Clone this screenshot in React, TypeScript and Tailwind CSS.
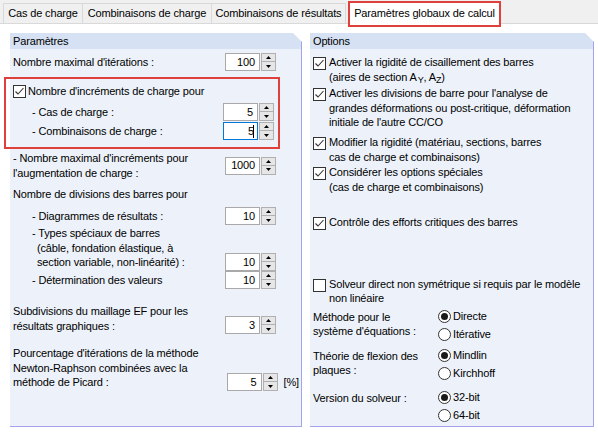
import React from "react";

function Spin({ v, focus }: { v: string; focus?: boolean }) {
  return (
    <div className="flex h-[18px] shrink-0">
      <div
        className={
          focus
            ? "w-[35px] h-[18px] bg-white border border-[#0078d7] flex items-center justify-end pr-[3px] text-[11px]"
            : "w-[35px] h-[18px] bg-white border border-[#a9a9a9] flex items-center justify-end pr-[4px] text-[11px]"
        }
      >
        <span>{v}</span>
        {focus && <span className="w-[1px] h-[13px] bg-black -ml-[1px]" />}
      </div>
      <div className="ml-[1px] w-[15px] h-[18px] flex flex-col border border-[#b0b0b0] bg-[#e6e6e6]">
        <div className="h-[8px] flex items-center justify-center border-b border-[#b0b0b0]">
          <svg width="5" height="3" viewBox="0 0 5 3">
            <path d="M0 3 L2.5 0 L5 3 Z" fill="#000" />
          </svg>
        </div>
        <div className="flex-1 flex items-center justify-center">
          <svg width="5" height="3" viewBox="0 0 5 3">
            <path d="M0 0 L2.5 3 L5 0 Z" fill="#000" />
          </svg>
        </div>
      </div>
    </div>
  );
}

function CB({ checked }: { checked?: boolean }) {
  return (
    <span className="w-[13px] h-[13px] border border-[#333333] bg-white shrink-0 flex items-center justify-center">
      {checked && (
        <svg width="11" height="11" viewBox="0 0 11 11">
          <path d="M1.5 5.5 L4 8 L9.5 2" stroke="#333333" strokeWidth="1.1" fill="none" />
        </svg>
      )}
    </span>
  );
}

function Radio({ on, label }: { on?: boolean; label: string }) {
  return (
    <div className="h-[18px] flex items-center">
      <span className="w-[13px] h-[13px] rounded-full border border-[#333333] bg-white shrink-0 flex items-center justify-center">
        {on && <span className="w-[7px] h-[7px] rounded-full bg-[#1a1a1a]" />}
      </span>
      <span className="ml-[2px]">{label}</span>
    </div>
  );
}

function Panel({ title, width, children }: { title: string; width: string; children: React.ReactNode }) {
  return (
    <div className={width === "l" ? "flex flex-col w-[292px] h-[394px]" : "flex flex-col w-[284px] h-[394px]"}>
      <div className="h-[16px] shrink-0 bg-[#d6e2f3] pl-[3px] leading-[16px] border-r border-[#a4a4ee] [clip-path:polygon(0_0,calc(100%_-_9px)_0,100%_9px,100%_100%,0_100%)]">
        {title}
      </div>
      <div className="flex-1 bg-[#edf2fa] border-r border-b border-[#a4a4ee] pl-[3px] flex flex-col">{children}</div>
    </div>
  );
}

export default function App() {
  return (
    <div className="w-[598px] h-[432px] bg-white text-black text-[11px] leading-[14.5px] font-['Liberation_Sans',Arial,sans-serif] tracking-[-0.15px] overflow-hidden">
      {/* Tabs */}
      <div className="h-[24px] bg-[#f0f0f0] border-b border-[#d9d9d9] flex items-end pl-[3px]">
        <div className="w-[80px] h-[20px] border-l border-t border-r border-[#d9d9d9] flex items-center justify-center">
          Cas de charge
        </div>
        <div className="w-[129px] h-[20px] border-t border-r border-[#d9d9d9] flex items-center justify-center">
          Combinaisons de charge
        </div>
        <div className="w-[134px] h-[20px] border-t border-r border-[#d9d9d9] flex items-center justify-center">
          Combinaisons de résultats
        </div>
        <div className="relative z-10 self-start mt-[1px] ml-[2px] w-[153px] h-[26px] bg-white border-2 border-[#e0403c] flex items-center justify-center pb-[1px]">
          Paramètres globaux de calcul
        </div>
      </div>

      {/* Content */}
      <div className="pt-[9px] pl-[10px] flex gap-[8px]">
        <Panel title="Paramètres" width="l">
          <div className="pr-[25px] flex flex-col">
            <div className="mt-[4px] h-[18px] flex items-center justify-between">
              <span>Nombre maximal d'itérations :</span>
              <Spin v="100" />
            </div>

            <div className="mt-[6px] -ml-[9px] w-[276px] border-2 border-[#e0403c] pl-[7px] pr-[4px] pt-[3px] pb-[7px] flex flex-col">
              <div className="h-[18px] flex items-center">
                <CB checked />
                <span className="ml-[2px]">Nombre d'incréments de charge pour</span>
              </div>
              <div className="mt-[3px] h-[18px] flex items-center justify-between">
                <span className="pl-[19px]">- Cas de charge :</span>
                <Spin v="5" />
              </div>
              <div className="mt-[1px] h-[18px] flex items-center justify-between">
                <span className="pl-[19px]">- Combinaisons de charge :</span>
                <Spin v="5" focus />
              </div>
            </div>

            <div className="mt-[2px] h-[29px] flex items-center justify-between">
              <span>
                - Nombre maximal d'incréments pour
                <br />
                l'augmentation de charge :
              </span>
              <Spin v="1000" />
            </div>

            <div className="mt-[7px] h-[14px] leading-[14px]">Nombre de divisions des barres pour</div>

            <div className="mt-[6px] h-[18px] flex items-center justify-between">
              <span className="pl-[19px]">- Diagrammes de résultats :</span>
              <Spin v="10" />
            </div>

            <div className="mt-[1px] h-[45px] flex justify-between">
              <div className="pl-[19px] self-start">
                <div>- Types spéciaux de barres</div>
                <div className="pl-[5px]">(câble, fondation élastique, à</div>
                <div className="pl-[5px]">section variable, non-linéarité) :</div>
              </div>
              <div className="self-end">
                <Spin v="10" />
              </div>
            </div>

            <div className="h-[18px] flex items-center justify-between">
              <span className="pl-[19px]">- Détermination des valeurs</span>
              <Spin v="10" />
            </div>

            <div className="mt-[15px] h-[30px] flex justify-between">
              <div className="self-start">
                Subdivisions du maillage EF pour les
                <br />
                résultats graphiques :
              </div>
              <div className="self-end">
                <Spin v="3" />
              </div>
            </div>

            <div className="mt-[12px] h-[45px] flex justify-between">
              <div className="self-start">
                Pourcentage d'itérations de la méthode
                <br />
                Newton-Raphson combinées avec la
                <br />
                méthode de Picard :
              </div>
              <div className="self-end flex items-center -mr-[23px]">
                <Spin v="5" />
                <span className="ml-[6px]">[%]</span>
              </div>
            </div>
          </div>
        </Panel>

        <Panel title="Options" width="r">
          <div className="flex flex-col">
            <div className="mt-[6px] flex items-start">
              <span className="mt-[2px]">
                <CB checked />
              </span>
              <span className="ml-[3px]">
                Activer la rigidité de cisaillement des barres
                <br />
                (aires de section A
                <span className="text-[9px] relative top-[2px] ml-[1px]">Y</span>, A
                <span className="text-[9px] relative top-[2px]">Z</span>)
              </span>
            </div>
            <div className="mt-[1px] flex items-start">
              <span className="mt-[2px]">
                <CB checked />
              </span>
              <span className="ml-[3px]">
                Activer les divisions de barre pour l'analyse de
                <br />
                grandes déformations ou post-critique, déformation
                <br />
                initiale de l'autre CC/CO
              </span>
            </div>
            <div className="mt-[5.5px] flex items-start">
              <span className="mt-[2px]">
                <CB checked />
              </span>
              <span className="ml-[3px]">
                Modifier la rigidité (matériau, sections, barres
                <br />
                cas de charge et combinaisons)
              </span>
            </div>
            <div className="mt-[1px] flex items-start">
              <span className="mt-[2px]">
                <CB checked />
              </span>
              <span className="ml-[3px]">
                Considérer les options spéciales
                <br />
                (cas de charge et combinaisons)
              </span>
            </div>
            <div className="mt-[21px] flex items-start">
              <span className="mt-[2px]">
                <CB checked />
              </span>
              <span className="ml-[3px]">Contrôle des efforts critiques des barres</span>
            </div>
            <div className="mt-[46.5px] flex items-start">
              <span className="mt-[2px]">
                <CB />
              </span>
              <span className="ml-[3px]">
                Solveur direct non symétrique si requis par le modèle
                <br />
                non linéaire
              </span>
            </div>

            <div className="mt-[2px] flex">
              <div className="w-[125px] pt-[2px]">
                Méthode pour le
                <br />
                système d'équations :
              </div>
              <div className="flex flex-col">
                <Radio on label="Directe" />
                <Radio label="Itérative" />
              </div>
            </div>
            <div className="mt-[3px] flex">
              <div className="w-[125px] pt-[2px]">
                Théorie de flexion des
                <br />
                plaques :
              </div>
              <div className="flex flex-col">
                <Radio on label="Mindlin" />
                <Radio label="Kirchhoff" />
              </div>
            </div>
            <div className="mt-[6px] flex">
              <div className="w-[125px] pt-[2px]">Version du solveur :</div>
              <div className="flex flex-col">
                <Radio on label="32-bit" />
                <Radio label="64-bit" />
              </div>
            </div>
          </div>
        </Panel>
      </div>
    </div>
  );
}
